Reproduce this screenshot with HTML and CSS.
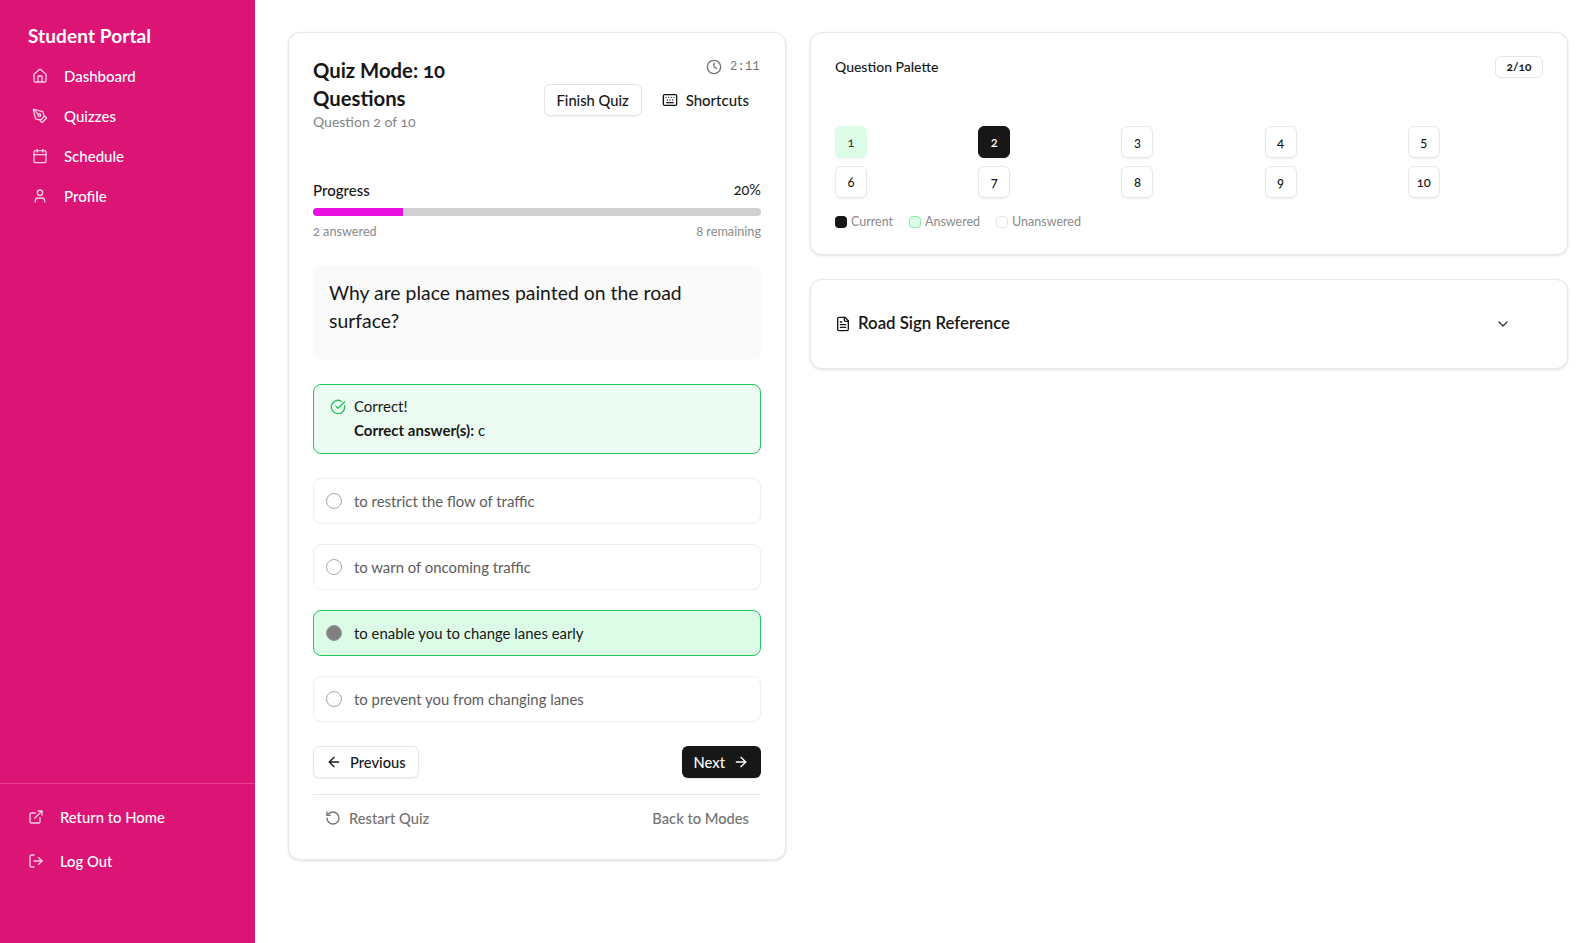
FILE: index.html
```html
<!DOCTYPE html>
<html lang="en">
<head>
<meta charset="utf-8">
<title>Student Portal</title>
<link rel="stylesheet" href="styles.css">
</head>
<body>
<div class="app">
  <aside class="sidebar">
    <div class="side-top">
      <h1 class="brand">Student Portal</h1>
      <nav class="nav">
        <a class="nav-item"><svg class="ic" viewBox="0 0 24 24"><path d="M15 21v-8a1 1 0 0 0-1-1h-4a1 1 0 0 0-1 1v8"/><path d="M3 10a2 2 0 0 1 .709-1.528l7-5.999a2 2 0 0 1 2.582 0l7 5.999A2 2 0 0 1 21 10v9a2 2 0 0 1-2 2H5a2 2 0 0 1-2-2z"/></svg>Dashboard</a>
        <a class="nav-item"><svg class="ic" viewBox="0 0 24 24"><path d="M15.707 21.293a1 1 0 0 1-1.414 0l-1.586-1.586a1 1 0 0 1 0-1.414l5.586-5.586a1 1 0 0 1 1.414 0l1.586 1.586a1 1 0 0 1 0 1.414z"/><path d="m18 13-1.375-6.874a1 1 0 0 0-.746-.776L3.235 2.028a1 1 0 0 0-1.207 1.207L5.35 15.879a1 1 0 0 0 .776.746L13 18"/><path d="m2.3 2.3 7.286 7.286"/><circle cx="11" cy="11" r="2"/></svg>Quizzes</a>
        <a class="nav-item"><svg class="ic" viewBox="0 0 24 24"><path d="M8 2v4"/><path d="M16 2v4"/><rect width="18" height="18" x="3" y="4" rx="2"/><path d="M3 10h18"/></svg>Schedule</a>
        <a class="nav-item"><svg class="ic" viewBox="0 0 24 24"><path d="M19 21v-2a4 4 0 0 0-4-4H9a4 4 0 0 0-4 4v2"/><circle cx="12" cy="7" r="4"/></svg>Profile</a>
      </nav>
    </div>
    <div class="side-foot">
      <a class="foot-item"><svg class="ic" viewBox="0 0 24 24"><path d="M15 3h6v6"/><path d="M10 14 21 3"/><path d="M18 13v6a2 2 0 0 1-2 2H5a2 2 0 0 1-2-2V8a2 2 0 0 1 2-2h6"/></svg>Return to Home</a>
      <a class="foot-item"><svg class="ic" viewBox="0 0 24 24"><path d="M9 21H5a2 2 0 0 1-2-2V5a2 2 0 0 1 2-2h4"/><polyline points="16 17 21 12 16 7"/><line x1="21" x2="9" y1="12" y2="12"/></svg>Log Out</a>
    </div>
  </aside>

  <main class="main">
    <section class="card quiz">
      <header class="quiz-head">
        <div class="quiz-title">
          <h2>Quiz Mode: 10 Questions</h2>
          <p>Question 2 of 10</p>
        </div>
        <div class="quiz-tools">
          <div class="timer"><svg class="ic" viewBox="0 0 24 24"><circle cx="12" cy="12" r="10"/><polyline points="12 6 12 12 16 14"/></svg><span>2:11</span></div>
          <div class="tool-row">
            <button class="btn outline">Finish Quiz</button>
            <button class="btn ghost"><svg class="ic" viewBox="0 0 24 24"><path d="M10 8h.01"/><path d="M12 12h.01"/><path d="M14 8h.01"/><path d="M16 12h.01"/><path d="M18 8h.01"/><path d="M6 8h.01"/><path d="M7 16h10"/><path d="M8 12h.01"/><rect width="20" height="16" x="2" y="4" rx="2"/></svg>Shortcuts</button>
          </div>
        </div>
      </header>

      <div class="progress">
        <div class="progress-top"><span>Progress</span><span class="pct">20%</span></div>
        <div class="track"><div class="fill" style="width:20%"></div></div>
        <div class="progress-foot"><span>2 answered</span><span>8 remaining</span></div>
      </div>

      <div class="question">Why are place names painted on the road surface?</div>

      <div class="feedback">
        <svg class="ic" viewBox="0 0 24 24"><path d="M21.801 10A10 10 0 1 1 17 3.335"/><path d="m9 11 3 3L22 4"/></svg>
        <div><div>Correct!</div><div><strong>Correct answer(s):</strong> c</div></div>
      </div>

      <div class="options">
        <div class="option"><span class="radio"></span>to restrict the flow of traffic</div>
        <div class="option"><span class="radio"></span>to warn of oncoming traffic</div>
        <div class="option selected"><span class="radio"></span>to enable you to change lanes early</div>
        <div class="option"><span class="radio"></span>to prevent you from changing lanes</div>
      </div>

      <div class="pager">
        <button class="btn outline"><svg class="ic" viewBox="0 0 24 24"><path d="m12 19-7-7 7-7"/><path d="M19 12H5"/></svg>Previous</button>
        <button class="btn dark">Next<svg class="ic" viewBox="0 0 24 24"><path d="M5 12h14"/><path d="m12 5 7 7-7 7"/></svg></button>
      </div>

      <div class="quiz-foot">
        <button class="btn muted"><svg class="ic" viewBox="0 0 24 24"><path d="M3 12a9 9 0 1 0 9-9 9.75 9.75 0 0 0-6.74 2.74L3 8"/><path d="M3 3v5h5"/></svg>Restart Quiz</button>
        <button class="btn muted">Back to Modes</button>
      </div>
    </section>

    <div class="side-col">
      <section class="card palette">
        <div class="palette-head"><h3>Question Palette</h3><span class="badge">2/10</span></div>
        <div class="palette-grid">
          <button class="cell answered">1</button>
          <button class="cell current">2</button>
          <button class="cell">3</button>
          <button class="cell">4</button>
          <button class="cell">5</button>
          <button class="cell">6</button>
          <button class="cell">7</button>
          <button class="cell">8</button>
          <button class="cell">9</button>
          <button class="cell">10</button>
        </div>
        <div class="legend">
          <span class="legend-item"><i class="swatch s-current"></i>Current</span>
          <span class="legend-item"><i class="swatch s-answered"></i>Answered</span>
          <span class="legend-item"><i class="swatch s-none"></i>Unanswered</span>
        </div>
      </section>

      <section class="card reference">
        <div class="ref-title"><svg class="ic" viewBox="0 0 24 24"><path d="M15 2H6a2 2 0 0 0-2 2v16a2 2 0 0 0 2 2h12a2 2 0 0 0 2-2V7Z"/><path d="M14 2v4a2 2 0 0 0 2 2h4"/><path d="M10 9H8"/><path d="M16 13H8"/><path d="M16 17H8"/></svg><h3>Road Sign Reference</h3></div>
        <svg class="ic chev" viewBox="0 0 24 24"><path d="m6 9 6 6 6-6"/></svg>
      </section>
    </div>
  </main>
</div>
</body>
</html>
```
FILE: styles.css
```css
* { box-sizing: border-box; }
html, body { margin: 0; height: 100%; }
body {
  font-family: "Lato", "Open Sans", sans-serif;
  font-variant-numeric: oldstyle-nums;
  font-size: 14px;
  color: #171717;
  background: #fff;
}
h1, h2, h3, p { margin: 0; }
button { font: inherit; color: inherit; background: none; border: 0; cursor: pointer; }
.ic {
  width: 16px; height: 16px; flex: none;
  fill: none; stroke: currentColor; stroke-width: 2;
  stroke-linecap: round; stroke-linejoin: round;
}
.app { display: flex; height: 943px; overflow: hidden; }

/* sidebar */
.sidebar {
  width: 255px; flex: none; height: 100%;
  background: #dc1476; color: #fff;
  display: flex; flex-direction: column; justify-content: space-between;
}
.side-top { padding: 24px 28px 0; }
.brand { font-size: 19px; line-height: 24px; font-weight: 700; letter-spacing: .1px; }
.nav { display: flex; flex-direction: column; margin-top: 8px; }
.nav-item {
  display: flex; align-items: center; gap: 16px;
  height: 40px; padding-left: 4px;
  font-size: 15px; font-weight: 500;
}
.nav-item .ic, .foot-item .ic { opacity: .8; }
.side-foot {
  border-top: 1px solid rgba(255,255,255,.2);
  padding: 13px 28px 62.5px;
  display: flex; flex-direction: column; gap: 4px;
}
.foot-item {
  display: flex; align-items: center; gap: 16px;
  height: 40px; padding-left: 0;
  font-size: 14.8px; font-weight: 500;
}

/* main */
.main {
  flex: 1; min-width: 0;
  padding: 32px 19px 0 33px;
  display: grid; grid-template-columns: 498px 1fr; gap: 24px;
  align-items: start;
}
.card {
  background: #fff;
  border: 1px solid #e8e8e8;
  border-radius: 12px;
  box-shadow: 0 1px 3px rgba(0,0,0,.12);
  padding: 24px;
}

/* quiz */
.quiz { padding-bottom: 25px; }
.quiz-head { display: flex; justify-content: space-between; }
.quiz-title { width: 190px; margin-top: -1px; margin-bottom: 1px; }
.quiz-title h2 { font-size: 20.3px; line-height: 28px; font-weight: 700; }
.quiz-title p { font-size: 14px; line-height: 20px; color: #858585; }
.quiz-tools { display: flex; flex-direction: column; align-items: flex-end; gap: 7px; }
.timer {
  display: flex; align-items: center; gap: 8px; height: 20px;
  color: #737373; font: 12px/20px "Liberation Mono", monospace;
  letter-spacing: .3px; padding-right: 1px;
}
.tool-row { display: flex; gap: 8px; }
.btn {
  display: inline-flex; align-items: center; gap: 8px;
  height: 32px; padding: 0 12px 1px;
  font-size: 14.7px; font-weight: 500; border-radius: 6px; white-space: nowrap;
}
.btn .ic { margin-top: 1px; }
.outline { border: 1px solid #e5e5e5; background: #fff; box-shadow: 0 1px 2px rgba(0,0,0,.06); }
.ghost { font-size: 15px; }
.dark { background: #171717; color: #fff; box-shadow: 0 1px 2px rgba(0,0,0,.1); }
.muted { color: #737373; }

.progress { margin-top: 47px; }
.progress-top, .progress-foot { display: flex; justify-content: space-between; }
.progress-top { font-size: 15px; line-height: 20px; font-weight: 500; }
.pct { font-size: 14.5px; font-weight: 400; }
.track { height: 8px; margin-top: 8px; border-radius: 4px; background: #d0d0d0; overflow: hidden; }
.fill { height: 100%; background: #e80fe0; }
.progress-foot { margin-top: 7px; font-size: 12.7px; line-height: 16px; color: #8a8a8a; }

.question {
  margin-top: 26px; height: 95px;
  padding: 14px 16px;
  background: #fafafa; border-radius: 8px;
  font-size: 19.4px; line-height: 28px;
}
.feedback {
  margin-top: 24px; height: 70px;
  display: flex; gap: 8px; padding: 8.5px 16px;
  background: #edfcf2; border: 1px solid #22c55e; border-radius: 8px;
  font-size: 15px; line-height: 24px;
}
.feedback .ic { color: #22c55e; margin-top: 5.5px; }
.feedback strong { font-weight: 700; }

.options { margin-top: 24px; display: flex; flex-direction: column; gap: 20px; }
.option {
  height: 46px; display: flex; align-items: center; gap: 12px;
  padding: 0 12px;
  border: 1px solid #eeeeee; border-radius: 8px;
  font-size: 14.9px; color: #5c5c5c;
  line-height: 18px;
}
.radio { width: 16px; height: 16px; flex: none; border: 1px solid #a8a8a8; border-radius: 50%; background: #fff; }
.selected { background: #dcfce7; border-color: #22c55e; color: #171717; }
.selected .radio { background: #808080; border-color: #999; }

.pager { margin-top: 24px; display: flex; justify-content: space-between; }
.quiz-foot {
  margin-top: 16px; padding-top: 7px;
  border-top: 1px solid #e5e5e5;
  display: flex; justify-content: space-between;
}

/* right column */
.side-col { display: flex; flex-direction: column; gap: 24px; }
.palette { height: 223px; }
.palette-head { display: flex; justify-content: space-between; align-items: center; height: 22px; margin-top: -1px; }
.palette-head h3 { font-size: 14px; font-weight: 500; padding-bottom: 2px; }
.badge {
  height: 22px; width: 48px; display: flex; align-items: center; justify-content: center;
  border: 1px solid #e5e5e5; border-radius: 6px; font-size: 12px; font-weight: 700;
  padding-bottom: 1px;
}
.palette-grid { margin-top: 48px; display: grid; grid-template-columns: repeat(5, 1fr); gap: 8px; }
.cell {
  width: 32px; height: 32px; padding: 0; border-radius: 6px;
  border: 1px solid #e8e8e8; background: #fff;
  box-shadow: 0 1px 2px rgba(0,0,0,.06);
  font-size: 13px; font-weight: 500;
  display: flex; align-items: center; justify-content: center;
}
.cell.answered { background: #dcfce7; border-color: #dcfce7; color: #444; }
.cell.current { background: #171717; border-color: #171717; color: #fff; }
.legend { margin-top: 16px; display: flex; gap: 16px; font-size: 12.5px; line-height: 16px; color: #8a8a8a; }
.legend-item { display: flex; align-items: center; gap: 4px; }
.swatch { width: 12px; height: 12px; border-radius: 4px; display: block; }
.s-current { background: #171717; }
.s-answered { background: #dcfce7; border: 1px solid #86efac; }
.s-none { background: #fff; border: 1px solid #e5e5e5; }

.reference {
  height: 90px; display: flex; align-items: center; justify-content: space-between;
  padding: 0 56px 0 24px;
}
.ref-title { display: flex; align-items: center; gap: 7px; }
.ref-title h3 { font-size: 16.8px; font-weight: 600; padding-bottom: 3px; }
.chev { color: #333; }
```
